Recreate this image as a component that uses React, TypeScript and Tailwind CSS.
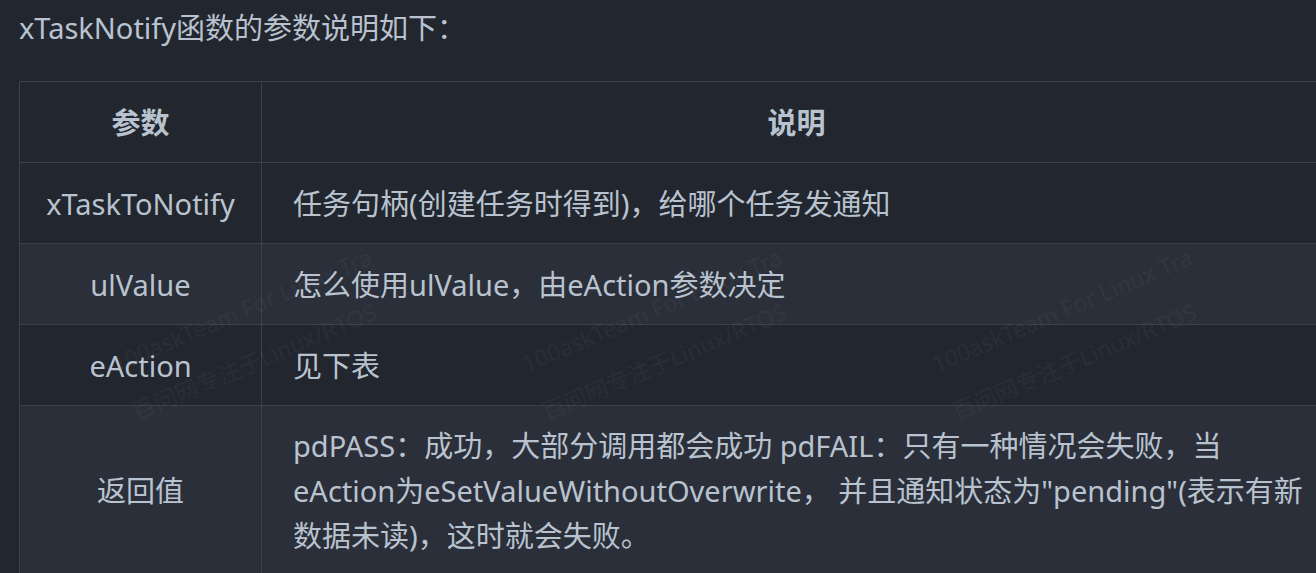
import React from 'react';

const rows = [
  { name: 'xTaskToNotify', desc: ['任务句柄(创建任务时得到)，给哪个任务发通知'] },
  { name: 'ulValue', desc: ['怎么使用ulValue，由eAction参数决定'] },
  { name: 'eAction', desc: ['见下表'] },
  {
    name: '返回值',
    desc: [
      'pdPASS：成功，大部分调用都会成功 pdFAIL：只有一种情况会失败，当',
      'eAction为eSetValueWithoutOverwrite， 并且通知状态为"pending"(表示有新',
      '数据未读)，这时就会失败。',
    ],
  },
];

const marks = ['left-[112px]', 'left-[522px]', 'left-[932px]'];

export default function App() {
  return (
    <div
      className="relative h-[573px] w-[1316px] overflow-hidden bg-[#22262e] text-[#b9c3cf]"
      style={{ fontFamily: '"Noto Sans", "Noto Sans CJK SC", sans-serif' }}
    >
      <p className="pl-[19px] pt-[5px] text-[29px] leading-[45px]">xTaskNotify函数的参数说明如下：</p>

      <table className="mt-[31px] ml-[19px] w-[1313px] border-collapse text-[29px] leading-[45px]">
        <thead>
          <tr className="bg-[#22262e]">
            <th className="h-[81px] w-[242px] border border-[#3a414b] p-0 font-bold">参数</th>
            <th className="h-[81px] border border-[#3a414b] p-0 font-bold">说明</th>
          </tr>
        </thead>
        <tbody>
          {rows.map((r, i) => (
            <tr key={r.name} className={i % 2 === 0 ? 'bg-[#22262e]' : 'bg-[#2a2f39]'}>
              <td className="h-[81px] border border-[#3a414b] py-[17px] text-center">{r.name}</td>
              <td className="border border-[#3a414b] py-[17px] pl-[31px]">
                {r.desc.map((line) => (
                  <div key={line} className="whitespace-nowrap">{line}</div>
                ))}
              </td>
            </tr>
          ))}
        </tbody>
      </table>

      {/* watermark */}
      {marks.map((left) => (
        <div
          key={left}
          className={`pointer-events-none absolute top-[282px] ${left} -rotate-[23deg] text-[23px] leading-[52px] text-white/[0.035]`}
        >
          <div className="whitespace-nowrap">100askTeam For Linux Tra</div>
          <div className="whitespace-nowrap">百问网专注于Linux/RTOS</div>
        </div>
      ))}
    </div>
  );
}
